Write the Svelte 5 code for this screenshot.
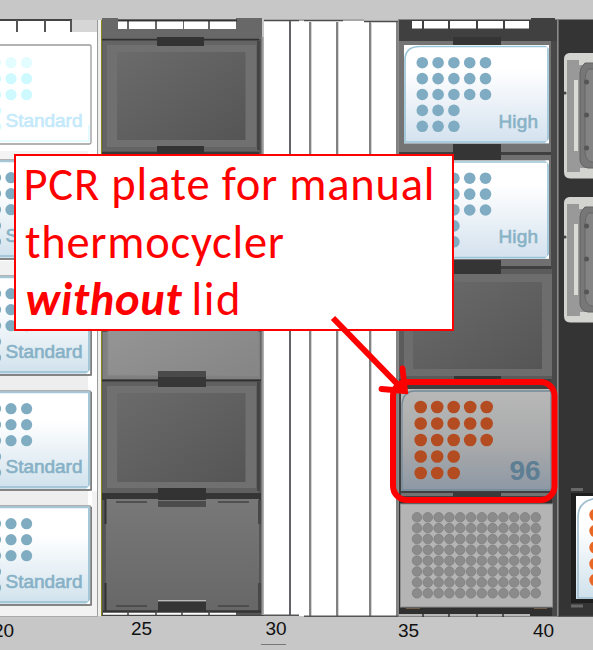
<script>
  const standardPlates = [
    { y: 45, faded: true },
    { y: 160 },
    { y: 276 },
    { y: 391 },
    { y: 506 }
  ];
  const sampleDots = [5, 5, 5, 3, 3].flatMap((n, row) =>
    Array.from({ length: n }, (_, col) => ({ col, row }))
  );
  const wells = Array.from({ length: 96 }, (_, i) => ({ col: i % 12, row: Math.floor(i / 12) }));
  const windows = [[118, 9], [129, 26], [157, 26], [184, 24], [210, 26]];
  const windowsRight = [[412, 10], [424, 24], [450, 26], [478, 25], [505, 24]];
  const rails = [310, 337, 370, 397];
  const blocks = [
    { y: 45, h: 102, iy: 52, ih: 88 },
    { y: 386, h: 102, iy: 393, ih: 89 }
  ];
  const heaters = [53, 197];
</script>

<main>
  <header></header>
  <section class="deck">
    <svg class="a" viewBox="0 17 98 600">
      <defs>
        <linearGradient id="plate" x1="0" y1="0" x2="0" y2="1">
          <stop offset=".3" stop-color="#fff" /><stop offset="1" stop-color="#cfe1ec" />
        </linearGradient>
      </defs>
      <rect y="17" width="98" height="16" fill="#c7c7c7" />
      <rect y="32" width="98" height="584" fill="#fff" />
      <rect x="72" y="20" width="26" height="12" fill="#d6d6d6" />
      <rect y="21" width="71" height="11" fill="#fff" />
      <path d="M0 20H72" stroke="#444" stroke-width="2" />
      <path d="M17 20V32M45 20V32M71 20V32" stroke="#555" stroke-width="2" />
      <rect y="151" width="88" height="9" fill="#f4f4f4" />
      <rect y="261" width="88" height="14" fill="#f1f1f1" />
      <rect y="376" width="88" height="15" fill="#efeeee" />
      <rect y="491" width="88" height="15" fill="#efeeee" />
      <rect y="606" width="97" height="10" fill="#f2f2f2" />
      <rect x="92" y="491" width="5" height="120" fill="#f2f2f2" />
      {#each standardPlates as p}
        <g transform="translate(0 {p.y})">
          <rect x="-60" y="0" width="151" height="99" rx="1.5" fill={p.faded ? '#fff' : 'url(#plate)'} stroke="#9a9a9a" stroke-width="1.3" />
          {#if !p.faded}
            <path d="M0 1.3H89V96H0" fill="none" stroke="#a5c8d8" stroke-width="2" />
            <path d="M91.2 1V99H0" fill="none" stroke="#777" stroke-width="1.4" />
            <path d="M90 94V98H86Z" fill="#fff" />
          {:else}
            <path d="M89 80V96H0" fill="none" stroke="#e5fbff" stroke-width="2" />
          {/if}
          {#each [0, 1, 2, 3, 4] as r}
            {#each [-4.5, 11, 26.6] as x, c}
              {#if r < 3 || c === 0}
                <circle cx={x} cy={17.7 + r * 16} r="5.6" fill={p.faded ? (r === 0 ? '#e2fcff' : '#cefaff') : '#80acc2'} />
              {/if}
            {/each}
          {/each}
          <text class="label" x="5.5" y="82" textLength="77" fill={p.faded ? '#c3e9fb' : '#86b1c6'} stroke={p.faded ? '#c3e9fb' : '#86b1c6'}>Standard</text>
        </g>
      {/each}
      <path d="M97.5 20V616" stroke="#9c9c9c" />
      <path d="M0 616.5H98" stroke="#aaa" />
    </svg>

    <svg class="b" viewBox="98 17 166 600">
      <defs>
        <linearGradient id="block" x1="0" y1="0" x2="1" y2="1">
          <stop stop-color="#6b6b6b" /><stop offset="1" stop-color="#555" />
        </linearGradient>
        <linearGradient id="light" x1="0" y1="0" x2="1" y2="1">
          <stop stop-color="#999" /><stop offset="1" stop-color="#858585" />
        </linearGradient>
        <linearGradient id="base" x1="0" y1="0" x2="0" y2="1">
          <stop stop-color="#787878" /><stop offset="1" stop-color="#676767" />
        </linearGradient>
      </defs>
      <rect x="98" y="17" width="166" height="600" fill="#c7c7c7" />
      <rect x="98" y="20" width="4" height="596" fill="#eee" />
      <rect x="102" y="20" width="160" height="596" fill="#555" />
      <rect x="102" y="18" width="160" height="21" fill="#686868" />
      <rect x="118" y="17" width="118" height="2.5" fill="#c7c7c7" />
      <path d="M118 20.5H237" stroke="#333" stroke-width="2" />
      {#each windows as [x, w]}
        <rect {x} y="21.5" width={w} height="7.5" fill="#fff" />
      {/each}
      <path d="M102 39.5H259M102 153H259M102 380.5H261" stroke="#303030" stroke-width="1.5" />
      <rect x="102.5" y="41" width="156" height="110" fill="#646464" />
      <rect x="102.5" y="332" width="158" height="47" fill="#808080" />
      <rect x="108" y="300" width="150" height="75" fill="url(#light)" stroke="#8b8b8b" />
      <rect x="102.5" y="382" width="156" height="111" fill="#606060" />
      {#each blocks as b}
        <rect x="107" y={b.y} width="149" height={b.h} fill="#707070" />
        <rect x="117" y={b.iy} width="128.5" height={b.ih} fill="url(#block)" />
        <rect x="257" y={b.y - 4} width="3" height="109" fill="#444" />
      {/each}
      <rect x="102" y="493" width="159" height="7" fill="#353535" />
      <rect x="106" y="499" width="153" height="113" fill="url(#base)" />
      <path d="M105.5 499V524M105.5 583V611" stroke="#333" stroke-width="2" />
      <path d="M260 500V524M260 583V612" stroke="#484848" stroke-width="4" />
      <path d="M116 502H147M218 502H249M116 606H147M218 606H249" stroke="#444" stroke-width="1.7" />
      <rect x="157" y="37" width="47" height="9" fill="#333" />
      <rect x="157" y="146" width="47" height="10" fill="#333" />
      <rect x="158" y="371" width="48" height="16" fill="#373737" />
      <rect x="158" y="371" width="48" height="6" fill="#4a4a4a" />
      <rect x="158" y="488" width="48" height="12" fill="#333" />
      <rect x="158" y="501" width="48" height="6" fill="#4c4c4c" />
      <path d="M158 600.5H206" stroke="#bbb" />
      <rect x="158" y="602" width="48" height="10" fill="#353535" />
      <path d="M103 611.5H261" stroke="#343434" stroke-width="2.5" />
      <path d="M103 613.7H236" stroke="#fff" stroke-width="2" />
      <path d="M128 611V616M156 611V616M182 611V616M209 611V616" stroke="#444" stroke-width="1.5" />
      <path d="M97.5 20V616" stroke="#999" />
      <path d="M101.5 20V616" stroke="#8b871b" />
      <path d="M262.5 37V616" stroke="#999" stroke-width="2" />
      <path d="M102 615.5H264" stroke="#444" />
    </svg>

    <svg class="c" viewBox="264 17 134 600">
      <rect x="264" y="17" width="134" height="5" fill="#c7c7c7" />
      <rect x="264" y="21" width="134" height="595" fill="#fff" />
      <path d="M264 20.5H299M304 20.5H343M364 21.5H398" stroke="#4c4c4c" stroke-width="1.7" />
      <path d="M299 20H304M343 20H364" stroke="#888" />
      <path d="M290 21V615" stroke="#515356" stroke-width="1.8" />
      {#each rails as x}
        <path d="M{x} 22V616" stroke="#747474" stroke-width="1.8" />
        <path d="M{x + 1.5} 22V616" stroke="#d5d5d5" />
      {/each}
      <path d="M264 615.3H299M304 616.3H398" stroke="#555" stroke-width="1.5" />
    </svg>

    <svg class="d" viewBox="398 17 160 600">
      <defs>
        <linearGradient id="high" x1="0" y1="0" x2="0" y2="1">
          <stop offset=".25" stop-color="#fff" /><stop offset="1" stop-color="#d3e1ee" />
        </linearGradient>
        <linearGradient id="sample" x1="0" y1="0" x2="0" y2="1">
          <stop stop-color="#b8b8b8" /><stop offset=".55" stop-color="#a9aaab" /><stop offset="1" stop-color="#8d98a5" />
        </linearGradient>
      </defs>
      <rect x="398" y="17" width="160" height="3" fill="#c7c7c7" />
      <rect x="398" y="19.5" width="160" height="597" fill="#404040" />
      <rect x="531" y="18" width="24" height="4" fill="#404040" />
      {#each windowsRight as [x, w]}
        <rect {x} y="21" width={w} height="7.5" fill="#fff" />
      {/each}
      <rect x="399" y="41" width="153" height="111" fill="#747474" />
      <rect x="399" y="155" width="153" height="111" fill="#707070" />
      <rect x="551" y="41" width="6" height="575" fill="#484848" />
      <rect x="453" y="37" width="48" height="8" fill="#353535" />
      <rect x="453" y="144" width="48" height="16" fill="#353535" />
      {#each [45, 160.5] as y}
        <rect x="404" {y} width="145" height="98.5" fill="url(#high)" />
        <path d="M405 {y + 15}Q405 {y + 1.5} 420 {y + 1.5}H548V{y + 97}H405Z" fill="none" stroke="#9bc5d8" stroke-width="1.7" />
        <path d="M545 {y}H549V{y + 4}ZM549 {y + 94}V{y + 98}H545Z" fill="#fff" />
        {#each sampleDots as d}
          <circle cx={422.3 + d.col * 15.8} cy={y + 17.7 + d.row * 15.9} r="5.8" fill="#80acc3" />
        {/each}
        <text class="label" x="498.5" y={y + 82.7} textLength="39.5" fill="#88b2c6" stroke="#88b2c6">High</text>
      {/each}
      <rect x="399" y="269" width="153" height="110" fill="#5b5b5b" />
      <rect x="404" y="274" width="148" height="102" fill="#6d6d6d" />
      <rect x="413" y="282" width="129" height="87" fill="url(#block)" />
      <rect x="453" y="260" width="48" height="14" fill="#353535" />
      <rect x="454" y="376" width="47" height="5" fill="#353535" />
      <rect x="401" y="389" width="151" height="102" fill="url(#sample)" />
      <path d="M402 407Q402 391 415 391H551V490H402Z" fill="none" stroke="#728997" stroke-width="1.3" />
      {#each sampleDots as d}
        <circle cx={420.7 + d.col * 16.5} cy={407 + d.row * 16.5} r="6.3" fill="#b44c21" />
      {/each}
      <text x="509.5" y="479.5" textLength="31" font-size="28" font-weight="700" fill="#5d7e93">96</text>
      <rect x="401" y="493" width="151" height="3" fill="#727272" />
      <rect x="453" y="492" width="48" height="5" fill="#3a3a3a" />
      <rect x="399" y="497" width="153" height="119" fill="#303030" />
      <rect x="400.5" y="504" width="152" height="103" fill="#b4b4b4" stroke="#8f8f8f" />
      {#each wells as w}
        <circle cx={417 + w.col * 10.8} cy={517.3 + w.row * 10.85} r="4.8" fill="#8b8b8b" stroke="#7d7d7d" stroke-width=".7" />
      {/each}
      <path d="M406 608.5H420M534 608.5H547" stroke="#725f48" />
      <path d="M399 615H530" stroke="#b8b8b8" stroke-width="1.8" />
      <path d="M423 614V617M449 614V617M477 614V617M503 614V617" stroke="#333" stroke-width="1.5" />
      <path d="M398.5 20V616M557.5 20V616" stroke="#8a8a8a" />
    </svg>

    <svg class="e" viewBox="558 17 35 600">
      <rect x="558" y="17" width="35" height="3" fill="#c7c7c7" />
      <rect x="558" y="19.5" width="35" height="597" fill="#343434" />
      <path d="M558.5 20V616" stroke="#686868" />
      {#each heaters as y}
        <g transform="translate(0 {y})">
          <path d="M600 0H569Q564 1 564 6V119Q564 125 570 125.5H600Z" fill="#d3d3cf" />
          <path d="M567 7H579V12H600V115H580V119H567Z" fill="#999" />
          <rect x="574" y="27" width="4" height="71" fill="#dad9d5" />
          <path d="M600 10H585Q580 14 580 20V107Q581 114 588 115H600Z" fill="#777" stroke="#636363" />
          <path d="M600 16H588Q585 20 585 27V100Q586 108 592 109H600Z" fill="#838383" stroke="#676767" />
          {#each [0, 1, 2] as n}
            <circle cx="586.5" cy={29 + n * 33} r="2.5" fill="#555" />
          {/each}
          <circle cx="565" cy="40" r="1.5" fill="#444" />
        </g>
      {/each}
      <rect x="571" y="488" width="12" height="3" fill="#686868" />
      <rect x="571" y="493" width="22" height="110" fill="#1f1f1f" />
      <rect x="576" y="496" width="30" height="103" fill="url(#plate)" />
      <path d="M600 498Q578 499 578 517V598H600" fill="none" stroke="#a2bfd0" stroke-width="1.6" />
      {#each [515, 531, 547.5, 564, 580] as y}
        <circle cx="595.5" cy={y} r="6.2" fill="#e96724" />
      {/each}
      <rect x="571" y="604.5" width="12" height="3" fill="#686868" />
      <path d="M558 616.3H593" stroke="#555" />
    </svg>
  </section>
  <footer>
    <svg viewBox="0 617 593 33">
      <g font-size="19" fill="#111">
        <text x="-7" y="637" textLength="21">20</text>
        <text x="131" y="635" textLength="21">25</text>
        <text x="265.5" y="635" textLength="21">30</text>
        <text x="398" y="637" textLength="21">35</text>
        <text x="533" y="637" textLength="21">40</text>
      </g>
      <path d="M261 644.5H286" stroke="#777" />
    </svg>
  </footer>

  <svg class="annotation" viewBox="0 0 593 650">
    <rect x="15" y="155" width="438" height="175" fill="#fff" stroke="#f00" stroke-width="2" />
    <g class="note" fill="#f00" font-size="46.5">
      <text x="23.5" y="200" textLength="411">PCR plate for manual</text>
      <text x="25" y="257.7" textLength="259">thermocycler</text>
      <text x="25.5" y="315" textLength="156" font-weight="700" font-style="italic">without</text>
      <text x="191.5" y="315" textLength="49">lid</text>
    </g>
    <rect x="393" y="382" width="161.5" height="118" rx="14" fill="none" stroke="#f00" stroke-width="6" />
    <g fill="none" stroke="#f00">
      <path d="M333 318L405 392" stroke-width="6" />
      <path d="M381.5 389L405 391L402.5 368.5" stroke-width="5.8" stroke-linecap="round" stroke-linejoin="miter" />
    </g>
  </svg>
</main>

<style>
  main {
    position: relative;
    display: flex;
    flex-direction: column;
    width: 593px;
    height: 650px;
    overflow: hidden;
    background: #c7c7c7;
    font-family: "Liberation Sans", Arial, sans-serif;
  }
  header { height: 17px; flex: none; }
  .deck { display: flex; height: 600px; flex: none; }
  svg { display: block; flex: none; }
  .deck svg { height: 600px; }
  .a { width: 98px; }
  .b { width: 166px; }
  .c { width: 134px; }
  .d { width: 160px; }
  .e { width: 35px; }
  .label { font-size: 19px; stroke-width: 0.6px; }
  footer { height: 33px; }
  footer svg { width: 593px; height: 33px; }
  .annotation { position: absolute; inset: 0; width: 593px; height: 650px; }
  .note { font-family: Carlito, Lato, sans-serif; }
</style>
